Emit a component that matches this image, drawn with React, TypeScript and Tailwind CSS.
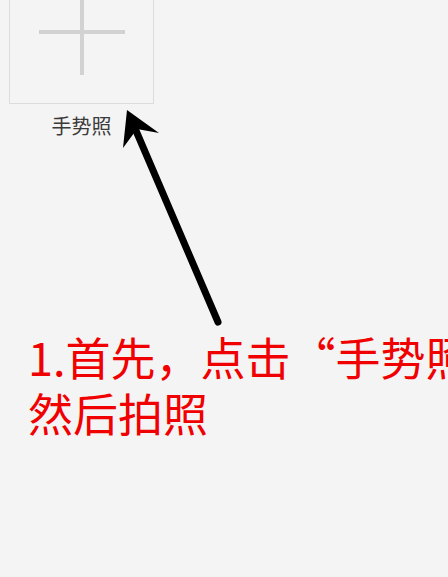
export default function App() {
  return (
    <div
      className="relative w-full h-[577px] overflow-hidden bg-[#f4f4f4]"
      style={{ fontFamily: '"Noto Sans CJK SC", "Noto Sans", sans-serif' }}
    >
      {/* Upload tile */}
      <div className="flex flex-col items-start pl-[9px]">
        <div className="w-[145px] flex flex-col items-center">
          <div className="mt-[-41px] w-[145px] h-[145px] border border-[#dcdcdc] flex items-center justify-center">
            <div className="relative w-[86px] h-[86px]">
              <div className="absolute left-0 right-0 top-[41px] h-[4px] bg-[#d2d2d2]" />
              <div className="absolute top-0 bottom-0 left-[41px] w-[4px] bg-[#d2d2d2]" />
            </div>
          </div>
          <span className="mt-[8px] text-[20px] leading-[28px] text-[#3a3a3a]">手势照</span>
        </div>
      </div>

      {/* Instruction */}
      <div className="mt-[189px] pl-[28px] text-[45px] leading-[56px] text-[#f00000] whitespace-nowrap">
        <div>1.首先，点击“手势照”</div>
        <div>然后拍照</div>
      </div>

      {/* Arrow overlay */}
      <svg
        className="absolute inset-0 pointer-events-none"
        width="448"
        height="577"
        viewBox="0 0 448 577"
      >
        <line x1="218" y1="322" x2="134" y2="126" stroke="#000" strokeWidth="7" strokeLinecap="round" />
        <polygon points="127,110 159,133 137,129 123,148" fill="#000" />
      </svg>
    </div>
  );
}
